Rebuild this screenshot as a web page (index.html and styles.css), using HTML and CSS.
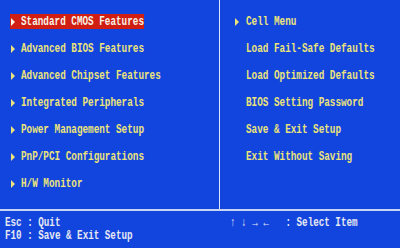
FILE: index.html
```html
<!DOCTYPE html>
<html>
<head>
<meta charset="utf-8">
<link rel="stylesheet" href="styles.css">
</head>
<body>
<div class="screen">
  <div class="main">
    <ul class="col left">
      <li class="item sel"><span class="hl"><svg class="arr" width="4" height="8" viewBox="0 0 4 8"><polygon points="0,0 4,4 0,8"/></svg><span class="t">Standard CMOS Features</span></span></li>
      <li class="item"><span class="hl"><svg class="arr" width="4" height="8" viewBox="0 0 4 8"><polygon points="0,0 4,4 0,8"/></svg><span class="t">Advanced BIOS Features</span></span></li>
      <li class="item"><span class="hl"><svg class="arr" width="4" height="8" viewBox="0 0 4 8"><polygon points="0,0 4,4 0,8"/></svg><span class="t">Advanced Chipset Features</span></span></li>
      <li class="item"><span class="hl"><svg class="arr" width="4" height="8" viewBox="0 0 4 8"><polygon points="0,0 4,4 0,8"/></svg><span class="t">Integrated Peripherals</span></span></li>
      <li class="item"><span class="hl"><svg class="arr" width="4" height="8" viewBox="0 0 4 8"><polygon points="0,0 4,4 0,8"/></svg><span class="t">Power Management Setup</span></span></li>
      <li class="item"><span class="hl"><svg class="arr" width="4" height="8" viewBox="0 0 4 8"><polygon points="0,0 4,4 0,8"/></svg><span class="t">PnP/PCI Configurations</span></span></li>
      <li class="item"><span class="hl"><svg class="arr" width="4" height="8" viewBox="0 0 4 8"><polygon points="0,0 4,4 0,8"/></svg><span class="t">H/W Monitor</span></span></li>
    </ul>
    <ul class="col right">
      <li class="item"><span class="hl"><svg class="arr" width="4" height="8" viewBox="0 0 4 8"><polygon points="0,0 4,4 0,8"/></svg><span class="t">Cell Menu</span></span></li>
      <li class="item"><span class="hl"><span class="arr"></span><span class="t">Load Fail-Safe Defaults</span></span></li>
      <li class="item"><span class="hl"><span class="arr"></span><span class="t">Load Optimized Defaults</span></span></li>
      <li class="item"><span class="hl"><span class="arr"></span><span class="t">BIOS Setting Password</span></span></li>
      <li class="item"><span class="hl"><span class="arr"></span><span class="t">Save &amp; Exit Setup</span></span></li>
      <li class="item"><span class="hl"><span class="arr"></span><span class="t">Exit Without Saving</span></span></li>
    </ul>
  </div>
  <div class="foot">
    <div class="fcol fleft">
      <div class="fline"><span class="t">Esc : Quit</span></div>
      <div class="fline"><span class="t">F10 : Save &amp; Exit Setup</span></div>
    </div>
    <div class="fcol fright">
      <div class="fline"><span class="t">↑ ↓ → ←   : Select Item</span></div>
    </div>
  </div>
</div>
</body>
</html>
```
FILE: styles.css
```css
html, body {
  margin: 0;
  padding: 0;
  background: #1245de;
}
.screen {
  width: 400px;
  height: 248px;
  background: #1245de;
  overflow: hidden;
}
.main {
  display: grid;
  grid-template-columns: 220px 1fr;
  height: 211px;
  box-sizing: border-box;
  border-bottom: 2px solid #c8d4f4;
}
.col {
  list-style: none;
  margin: 0;
  padding: 8px 0 0 0;
}
.left {
  border-right: 1px solid #dce4f8;
  padding-left: 10px;
}
.right {
  padding-left: 14px;
}
.item {
  height: 27px;
  display: flex;
  align-items: center;
}
.hl {
  display: inline-flex;
  align-items: center;
  height: 15px;
  padding: 0 1px;
  color: #ece47a;
  fill: #ece47a;
}
.sel .hl {
  width: 134px;
  box-sizing: border-box;
  background: #d01e12;
  color: #f6f2e6;
  fill: #f6f2e6;
}
.arr {
  display: block;
  width: 4px;
  height: 8px;
  margin-right: 6px;
  flex: none;
}
.right .arr {
  margin-right: 7px;
}
.t {
  display: inline-block;
  font-family: "Liberation Mono", monospace;
  font-weight: bold;
  font-size: 13.5px;
  line-height: 15px;
  white-space: pre;
  transform: scaleX(0.69);
  transform-origin: 0 50%;
}
.foot {
  display: grid;
  grid-template-columns: 220px 1fr;
  padding-top: 5px;
  color: #e6e8f2;
}
.fcol {
  overflow: visible;
}
.fleft {
  padding-left: 5px;
}
.fright {
  padding-left: 10px;
}
.fline {
  height: 13px;
  display: flex;
  align-items: center;
}
.fline .t {
  font-size: 12px;
  line-height: 12px;
  transform: scaleX(0.77);
}
```
